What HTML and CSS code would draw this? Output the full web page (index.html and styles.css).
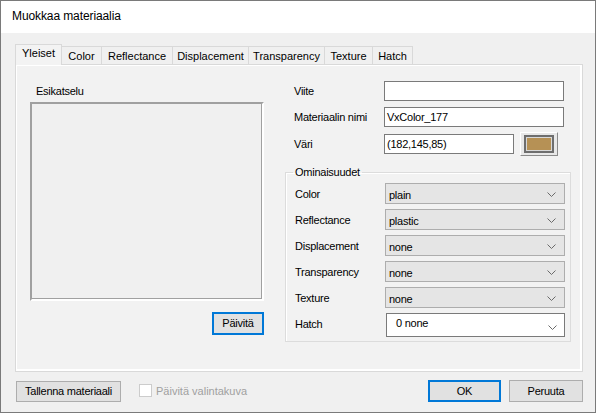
FILE: index.html
```html
<!DOCTYPE html>
<html>
<head>
<meta charset="utf-8">
<link rel="stylesheet" href="styles.css">
</head>
<body>
<div class="window">
  <div class="titlebar">Muokkaa materiaalia</div>
  <div class="body">
    <div class="tabs">
      <div class="tab active w-yleiset">Yleiset</div>
      <div class="tab w-color">Color</div>
      <div class="tab w-refl">Reflectance</div>
      <div class="tab w-disp">Displacement</div>
      <div class="tab w-trans">Transparency</div>
      <div class="tab w-tex">Texture</div>
      <div class="tab w-hatch">Hatch</div>
    </div>
    <div class="panel">
      <div class="preview-col">
        <div class="preview-label">Esikatselu</div>
        <div class="preview-box"></div>
        <div class="preview-actions"><div class="btn focused btn-paivita">Päivitä</div></div>
      </div>
      <div class="props-col">
        <div class="row row-first">
          <span class="lbl">Viite</span>
          <div class="input"></div>
        </div>
        <div class="row">
          <span class="lbl">Materiaalin nimi</span>
          <div class="input">VxColor_177</div>
        </div>
        <div class="row row-color">
          <span class="lbl">Väri</span>
          <div class="input input-short">(182,145,85)</div>
          <div class="swatch-btn"><div class="swatch"></div></div>
        </div>
        <fieldset class="group">
          <legend>Ominaisuudet</legend>
          <div class="combo-row"><span class="lbl">Color</span><div class="combo"><span>plain</span><svg class="chev" width="9" height="6" viewBox="0 0 9 6"><path d="M0.5 0.5 L4.5 4.5 L8.5 0.5" fill="none" stroke="#6a6a6a" stroke-width="1"/></svg></div></div>
          <div class="combo-row"><span class="lbl">Reflectance</span><div class="combo"><span>plastic</span><svg class="chev" width="9" height="6" viewBox="0 0 9 6"><path d="M0.5 0.5 L4.5 4.5 L8.5 0.5" fill="none" stroke="#6a6a6a" stroke-width="1"/></svg></div></div>
          <div class="combo-row"><span class="lbl">Displacement</span><div class="combo"><span>none</span><svg class="chev" width="9" height="6" viewBox="0 0 9 6"><path d="M0.5 0.5 L4.5 4.5 L8.5 0.5" fill="none" stroke="#6a6a6a" stroke-width="1"/></svg></div></div>
          <div class="combo-row"><span class="lbl">Transparency</span><div class="combo"><span>none</span><svg class="chev" width="9" height="6" viewBox="0 0 9 6"><path d="M0.5 0.5 L4.5 4.5 L8.5 0.5" fill="none" stroke="#6a6a6a" stroke-width="1"/></svg></div></div>
          <div class="combo-row"><span class="lbl">Texture</span><div class="combo"><span>none</span><svg class="chev" width="9" height="6" viewBox="0 0 9 6"><path d="M0.5 0.5 L4.5 4.5 L8.5 0.5" fill="none" stroke="#6a6a6a" stroke-width="1"/></svg></div></div>
          <div class="combo-row hatch-row"><span class="lbl">Hatch</span><div class="combo combo-white"><span>0 none</span><svg class="chev" width="9" height="6" viewBox="0 0 9 6"><path d="M0.5 0.5 L4.5 4.5 L8.5 0.5" fill="none" stroke="#6a6a6a" stroke-width="1"/></svg></div></div>
        </fieldset>
      </div>
    </div>
    <div class="footer">
      <div class="btn btn-save">Tallenna materiaali</div>
      <label class="check disabled"><span class="box"></span><span>Päivitä valintakuva</span></label>
      <div class="spacer"></div>
      <div class="btn focused btn-ok">OK</div>
      <div class="btn btn-cancel">Peruuta</div>
    </div>
  </div>
</div>
</body>
</html>
```

FILE: styles.css
```css
* { box-sizing: border-box; }
html, body {
  margin: 0;
  padding: 0;
  background: #ffffff;
}
body {
  font-family: "Liberation Sans", Arial, sans-serif;
  font-size: 11px;
  letter-spacing: -0.25px;
  color: #000;
}
.window {
  width: 596px;
  height: 413px;
  border: 1px solid #7a7a7a;
  background: #f0f0f0;
  display: flex;
  flex-direction: column;
}
.titlebar {
  height: 32px;
  background: #ffffff;
  font-size: 12px;
  letter-spacing: -0.1px;
  line-height: 31px;
  padding-left: 11px;
  flex: none;
}
.body {
  padding: 11px 0 0 14px;
  flex: 1;
}
.tabs {
  display: flex;
  align-items: flex-end;
  height: 20px;
  position: relative;
  z-index: 2;
  letter-spacing: 0;
}
.tab {
  height: 18px;
  border: 1px solid #d9d9d9;
  border-bottom: none;
  margin-left: -1px;
  background: #f0f0f0;
  text-align: center;
  line-height: 16px;
  padding-top: 1px;
}
.tab.active {
  height: 21px;
  margin-left: 0;
  margin-bottom: -1px;
  background: #f3f3f3;
  border-color: #d9d9d9;
  line-height: 17px;
  position: relative;
  z-index: 3;
  padding-top: 0;
}
.w-yleiset { width: 47px; }
.w-color { width: 41px; margin-left: -1px; }
.w-refl { width: 72px; }
.w-disp { width: 77px; }
.w-trans { width: 77px; }
.w-tex { width: 49px; }
.w-hatch { width: 41px; }

.panel {
  width: 568px;
  height: 308px;
  border: 1px solid #d9d9d9;
  box-shadow: inset 0 0 0 1px #ffffff, inset -1px -1px 0 1px #ffffff;
  background: #f2f2f2;
  display: flex;
  align-items: flex-start;
}
.preview-col {
  margin-left: 14px;
  width: 234px;
  display: flex;
  flex-direction: column;
}
.preview-label {
  margin-top: 20px;
  padding-left: 6px;
  line-height: 13px;
  height: 13px;
}
.preview-box {
  margin-top: 4px;
  height: 199px;
  border-style: solid;
  border-width: 2px 2px 2px 2px;
  border-color: #a0a0a0 #ffffff #ffffff #a0a0a0;
  box-shadow: inset -1px -1px 0 #a0a0a0;
  background: #f0f0f0;
}
.preview-actions {
  display: flex;
  justify-content: flex-end;
  margin-top: 11px;
}
.btn {
  background: #e1e1e1;
  border: 1px solid #adadad;
  display: flex;
  align-items: center;
  justify-content: center;
  line-height: 13px;
}
.btn.focused {
  border: 2px solid #0078d7;
}
.btn-paivita { width: 52px; height: 23px; }

.props-col {
  margin-left: 21px;
  width: 286px;
  display: flex;
  flex-direction: column;
}
.row {
  display: flex;
  align-items: center;
  height: 20px;
  margin-top: 6px;
  padding-left: 9px;
}
.row-first { margin-top: 16px; }
.lbl {
  width: 90px;
  flex: none;
  line-height: 13px;
  padding-top: 1px;
}
.input {
  width: 180px;
  height: 20px;
  background: #ffffff;
  border: 1px solid #7a7a7a;
  padding-left: 2px;
  line-height: 18px;
  font-size: 11px;
}
.input-short { width: 130px; }
.row-color {
  height: 24px;
  margin-top: 5px;
}
.swatch-btn {
  margin-left: 6px;
  width: 38px;
  height: 24px;
  background: #e8e8e8;
  border-style: solid;
  border-width: 1px;
  border-color: #ffffff #8a8a8a #8a8a8a #ffffff;
  padding: 2px 3px 2px 3px;
}
.swatch {
  width: 100%;
  height: 100%;
  border: 2px solid #6e6e6e;
  box-shadow: inset 0 0 0 1px #d8d8d8;
  background: #b69155;
}
.group {
  margin: 10px 0 0 0;
  padding: 0 0 4px 7px;
  border: 1px solid #dcdcdc;
  box-shadow: inset 1px 1px 0 #ffffff;
  min-width: 0;
}
.group legend {
  padding: 0 2px;
  line-height: 13px;
  height: 13px;
  margin-left: 0;
}
.combo-row {
  display: flex;
  align-items: center;
  padding-left: 2px;
  margin-top: 5px;
  height: 21px;
}
.combo-row:first-of-type { margin-top: 4px; }
.combo {
  width: 180px;
  height: 21px;
  background: #e5e5e5;
  border: 1px solid #adadad;
  display: flex;
  align-items: center;
  justify-content: space-between;
  padding: 2px 8px 0 3px;
  font-size: 11px;
}
.hatch-row {
  height: 24px;
  margin-top: 5px;
}
.hatch-row .lbl { margin-top: -2px; }
.combo-white {
  width: 179px;
  height: 24px;
  margin-left: 1px;
  background: #ffffff;
  border: 1px solid #7a7a7a;
  padding: 0 7px 0 9px;
  align-items: center;
}
.combo-white span { margin-top: -4px; }
.combo-white .chev { margin-top: 6px; }
.chev { flex: none; }

.footer {
  display: flex;
  align-items: center;
  margin-top: 8px;
  padding-left: 1px;
  width: 568px;
  height: 22px;
}
.btn-save { width: 105px; height: 21px; }
.check {
  display: flex;
  align-items: center;
  margin-left: 18px;
  color: #a0a0a0;
  font-size: 11px;
  letter-spacing: 0;
}
.check .box {
  width: 13px;
  height: 13px;
  border: 1px solid #cccccc;
  background: #ffffff;
  margin-right: 4px;
  margin-top: -1px;
}
.spacer { flex: 1; }
.btn-ok { width: 73px; height: 22px; font-size: 11px; }
.btn-cancel { width: 74px; height: 22px; margin-left: 8px; font-size: 11px; }
```
